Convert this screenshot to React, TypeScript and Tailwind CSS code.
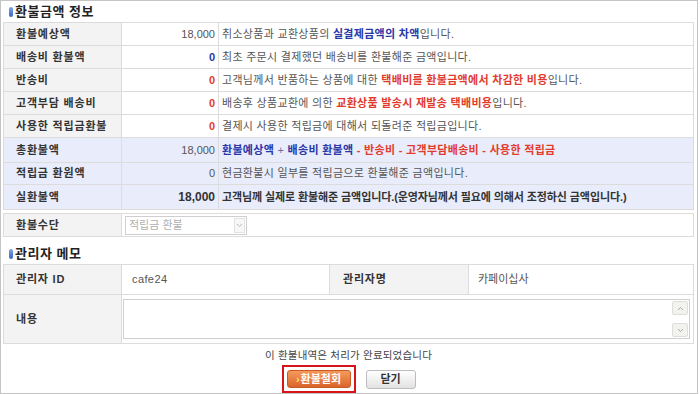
import React from 'react';

const font = 'font-["Liberation_Sans","Noto_Sans_CJK_KR",sans-serif]';

type Row = {
  label: string;
  amount: string;
  amountClass: string;
  desc: React.ReactNode;
  blue?: boolean;
  h: string;
};

const Blue = ({ children }: { children: React.ReactNode }) => (
  <span className="font-bold text-[#2a37a8]">{children}</span>
);
const Red = ({ children }: { children: React.ReactNode }) => (
  <span className="font-bold text-[#e23b2e]">{children}</span>
);

const rows: Row[] = [
  {
    label: '환불예상액',
    amount: '18,000',
    amountClass: 'text-[#555]',
    desc: (
      <>
        취소상품과 교환상품의 <Blue>실결제금액의 차액</Blue>입니다.
      </>
    ),
    h: 'h-[23px]',
  },
  {
    label: '배송비 환불액',
    amount: '0',
    amountClass: 'text-[#2a37a8] font-bold',
    desc: '최초 주문시 결제했던 배송비를 환불해준 금액입니다.',
    h: 'h-[23px]',
  },
  {
    label: '반송비',
    amount: '0',
    amountClass: 'text-[#e23b2e] font-bold',
    desc: (
      <>
        고객님께서 반품하는 상품에 대한 <Red>택배비를 환불금액에서 차감한 비용</Red>입니다.
      </>
    ),
    h: 'h-[23px]',
  },
  {
    label: '고객부담 배송비',
    amount: '0',
    amountClass: 'text-[#e23b2e] font-bold',
    desc: (
      <>
        배송후 상품교환에 의한 <Red>교환상품 발송시 재발송 택배비용</Red>입니다.
      </>
    ),
    h: 'h-[23px]',
  },
  {
    label: '사용한 적립금환불',
    amount: '0',
    amountClass: 'text-[#e23b2e] font-bold',
    desc: '결제시 사용한 적립금에 대해서 되돌려준 적립금입니다.',
    h: 'h-[23px]',
  },
  {
    label: '총환불액',
    amount: '18,000',
    amountClass: 'text-[#555]',
    desc: (
      <>
        <Blue>환불예상액</Blue>
        <span className="text-[#6a6fa8]"> + </span>
        <Blue>배송비 환불액</Blue>
        <Red> - 반송비 - 고객부담배송비 - 사용한 적립금</Red>
      </>
    ),
    blue: true,
    h: 'h-[25px]',
  },
  {
    label: '적립금 환원액',
    amount: '0',
    amountClass: 'text-[#555]',
    desc: '현금환불시 일부를 적립금으로 환불해준 금액입니다.',
    blue: true,
    h: 'h-[22px]',
  },
  {
    label: '실환불액',
    amount: '18,000',
    amountClass: 'text-[#333] font-bold text-[12px]',
    desc: (
      <span className="font-semibold tracking-[-0.1px] text-[#333]">
        고객님께 실제로 환불해준 금액입니다.(운영자님께서 필요에 의해서 조정하신 금액입니다.)
      </span>
    ),
    blue: true,
    h: 'h-[24px]',
  },
];

const Title = ({ children, className }: { children: React.ReactNode; className?: string }) => (
  <div className={`flex items-center pl-[6px] ${className ?? ''}`}>
    <span className="mr-[2px] h-[10px] w-[4px] rounded-[2px] bg-gradient-to-b from-[#7fa6e6] to-[#3766c0]" />
    <span className="text-[13px] font-bold tracking-[0.5px] text-[#222]">{children}</span>
  </div>
);

const labelCell = 'flex items-center border-r border-[#dcdcdc] pl-[12px] font-semibold tracking-[0.8px] text-[#333]';

const App: React.FC = () => {
  return (
    <div className={`h-[394px] w-[698px] border border-[#c4c4c4] bg-white pl-[2px] pr-[3px] text-[11px] text-[#555] ${font}`}>
      {/* 환불금액 정보 */}
      <Title className="h-[21px]">환불금액 정보</Title>

      <div className="border border-[#dcdcdc]">
        {rows.map((row, i) => (
          <div
            key={row.label}
            className={`flex ${row.h} ${i < rows.length - 1 ? 'border-b border-[#dcdcdc]' : ''} ${
              row.blue ? 'bg-[#e8ecfb]' : ''
            }`}
          >
            <div className={`${labelCell} w-[118px] ${row.blue ? '' : 'bg-[#f3f3f3]'}`}>{row.label}</div>
            <div
              className={`flex w-[97px] items-center justify-end border-r border-[#dcdcdc] pr-[3px] ${row.amountClass}`}
            >
              {row.amount}
            </div>
            <div className="flex flex-1 items-center pl-[3px] tracking-[0.3px] whitespace-pre">
              <span>{row.desc}</span>
            </div>
          </div>
        ))}
      </div>

      {/* 환불수단 */}
      <div className="mt-[3px] flex h-[24px] border border-[#dcdcdc]">
        <div className={`${labelCell} w-[118px] bg-[#f3f3f3]`}>환불수단</div>
        <div className="flex flex-1 items-center pl-[3px]">
          <div className="flex h-[19px] w-[122px] items-center justify-between border border-[#cfcfcf] bg-white pl-[3px]">
            <span className="text-[#b0b0b0]">적립금 환불</span>
            <span className="mr-[1px] flex h-[15px] w-[11px] items-center justify-center border border-[#e2e2e2] bg-[#f7f7f7]">
              <svg width="7" height="5" viewBox="0 0 7 5">
                <path d="M1 1l2.5 2.5L6 1" stroke="#b9b9b9" fill="none" strokeWidth="1" />
              </svg>
            </span>
          </div>
        </div>
      </div>

      {/* 관리자 메모 */}
      <Title className="h-[27px] pt-[7px]">관리자 메모</Title>

      <div className="border border-[#dcdcdc]">
        <div className="flex h-[30px] border-b border-[#dcdcdc]">
          <div className={`${labelCell} w-[118px] bg-[#f3f3f3]`}>관리자 ID</div>
          <div className="flex w-[208px] items-center border-r border-[#dcdcdc] pl-[10px] tracking-[0.4px]">
            cafe24
          </div>
          <div className={`${labelCell} w-[139px] bg-[#f3f3f3] pl-[13px]`}>관리자명</div>
          <div className="flex flex-1 items-center pl-[9px]">카페이십사</div>
        </div>
        <div className="flex h-[48px]">
          <div className={`${labelCell} w-[118px] bg-[#f3f3f3]`}>내용</div>
          <div className="flex flex-1 items-center pl-[1px] pr-[3px]">
            <div className="flex h-[40px] flex-1 justify-end border border-[#cfcfcf] bg-white p-[1px]">
              <div className="flex w-[16px] flex-col justify-between">
                <span className="flex h-[14px] items-center justify-center rounded-[2px] border border-[#dedede] bg-[#f2f2ee]">
                  <svg width="7" height="5" viewBox="0 0 7 5">
                    <path d="M1 4l2.5-2.5L6 4" stroke="#a8a8a8" fill="none" strokeWidth="1" />
                  </svg>
                </span>
                <span className="flex h-[14px] items-center justify-center rounded-[2px] border border-[#dedede] bg-[#f2f2ee]">
                  <svg width="7" height="5" viewBox="0 0 7 5">
                    <path d="M1 1l2.5 2.5L6 1" stroke="#a8a8a8" fill="none" strokeWidth="1" />
                  </svg>
                </span>
              </div>
            </div>
          </div>
        </div>
      </div>

      <p className="mt-[5px] text-center text-[10.5px] leading-[13px] tracking-[0.2px] text-[#444]">
        이 환불내역은 처리가 완료되었습니다
      </p>

      <div className="mt-[3px] flex items-center justify-center gap-[10px]">
        <div className="border-2 border-[#d8141a] p-[3px]">
          <button className="flex h-[18px] w-[64px] items-center justify-center rounded-[3px] border border-[#c85a22] bg-gradient-to-b from-[#f59a5c] to-[#d9652b] text-[11px] font-bold text-white">
            <span className="mr-[1px] text-[#ffe15a]">›</span>환불철회
          </button>
        </div>
        <button className="flex h-[19px] w-[50px] items-center justify-center rounded-[3px] border border-[#bdbdbd] bg-gradient-to-b from-[#ffffff] to-[#e2e2e2] text-[11px] font-bold text-[#333]">
          닫기
        </button>
      </div>
    </div>
  );
};

export default App;
